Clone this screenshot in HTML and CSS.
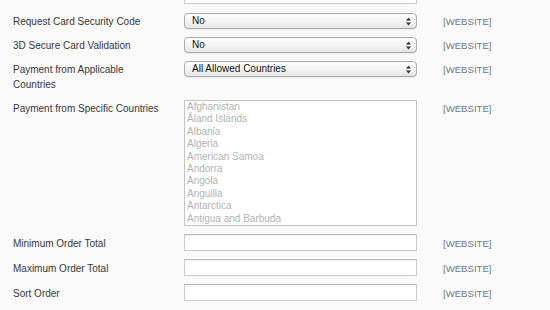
FILE: index.html
```html
<!DOCTYPE html>
<html lang="en">
<head>
    <meta charset="UTF-8">
    <title>Payment settings</title>
    <link rel="stylesheet" href="styles.css">
</head>
<body>
    <div class="form">

        <div class="row row-first">
            <div class="label"></div>
            <div class="field"><div class="text-input"></div></div>
            <div class="scope"></div>
        </div>

        <div class="row row-select">
            <div class="label">Request Card Security Code</div>
            <div class="field">
                <div class="select">
                    <span>No</span>
                    <svg class="arrows" width="5" height="9" viewBox="0 0 5 9"><path d="M2.5 0.5 L5 3.5 L0 3.5 Z M2.5 8.5 L5 5.5 L0 5.5 Z" fill="#333"/></svg>
                </div>
            </div>
            <div class="scope">[WEBSITE]</div>
        </div>

        <div class="row row-select">
            <div class="label">3D Secure Card Validation</div>
            <div class="field">
                <div class="select">
                    <span>No</span>
                    <svg class="arrows" width="5" height="9" viewBox="0 0 5 9"><path d="M2.5 0.5 L5 3.5 L0 3.5 Z M2.5 8.5 L5 5.5 L0 5.5 Z" fill="#333"/></svg>
                </div>
            </div>
            <div class="scope">[WEBSITE]</div>
        </div>

        <div class="row row-tall">
            <div class="label">Payment from Applicable Countries</div>
            <div class="field">
                <div class="select">
                    <span>All Allowed Countries</span>
                    <svg class="arrows" width="5" height="9" viewBox="0 0 5 9"><path d="M2.5 0.5 L5 3.5 L0 3.5 Z M2.5 8.5 L5 5.5 L0 5.5 Z" fill="#333"/></svg>
                </div>
            </div>
            <div class="scope">[WEBSITE]</div>
        </div>

        <div class="row row-list">
            <div class="label">Payment from Specific Countries</div>
            <div class="field">
                <div class="listbox">
                    <div>Afghanistan</div>
                    <div>Åland Islands</div>
                    <div>Albania</div>
                    <div>Algeria</div>
                    <div>American Samoa</div>
                    <div>Andorra</div>
                    <div>Angola</div>
                    <div>Anguilla</div>
                    <div>Antarctica</div>
                    <div>Antigua and Barbuda</div>
                </div>
            </div>
            <div class="scope">[WEBSITE]</div>
        </div>

        <div class="row row-input">
            <div class="label">Minimum Order Total</div>
            <div class="field"><div class="text-input"></div></div>
            <div class="scope">[WEBSITE]</div>
        </div>

        <div class="row row-input">
            <div class="label">Maximum Order Total</div>
            <div class="field"><div class="text-input"></div></div>
            <div class="scope">[WEBSITE]</div>
        </div>

        <div class="row row-input">
            <div class="label">Sort Order</div>
            <div class="field"><div class="text-input"></div></div>
            <div class="scope">[WEBSITE]</div>
        </div>

    </div>
</body>
</html>
```

FILE: styles.css
```css
body {
    margin: 0;
    background-color: #fafafa;
    font-family: "Liberation Sans", Arial, sans-serif;
    font-size: 10px;
    color: #383838;
}

.form {
    margin-top: -13px;
}

.row {
    display: grid;
    grid-template-columns: 184px 233px 1fr;
    align-items: start;
}
.row-first { height: 26px; }
.row-select { height: 24px; }
.row-tall { height: 39px; }
.row-list { height: 134px; }
.row-input { height: 25px; }

.label {
    padding-left: 13px;
    padding-top: 1px;
    line-height: 15px;
    padding-right: 22px;
}
.row-input .label {
    padding-top: 2px;
}

.scope {
    padding-left: 26px;
    padding-top: 1px;
    font-size: 9.6px;
    line-height: 15px;
    color: #6d7a86;
}
.row-input .scope {
    padding-top: 2px;
}

.select {
    height: 16px;
    box-sizing: border-box;
    border: 1px solid #ababab;
    border-radius: 4px;
    background: linear-gradient(#ffffff, #f4f4f4 50%, #e6e6e6);
    box-shadow: 0 1px 0 rgba(0, 0, 0, 0.05);
    display: flex;
    align-items: center;
    justify-content: space-between;
    padding: 0 5px 0 7px;
    line-height: 14px;
    color: #111;
}
.select .arrows {
    display: block;
}

.listbox {
    height: 126px;
    box-sizing: border-box;
    border: 1px solid #c4c4c4;
    background-color: #fff;
    padding-left: 2px;
    color: #b3b3b3;
    overflow: hidden;
}
.listbox div {
    height: 12.4px;
    line-height: 12.4px;
}

.text-input {
    height: 17px;
    box-sizing: border-box;
    border: 1px solid #cbcbcb;
    border-top-color: #b8b8b8;
    background-color: #fff;
    box-shadow: inset 0 1px 1px rgba(0, 0, 0, 0.06);
}
```
